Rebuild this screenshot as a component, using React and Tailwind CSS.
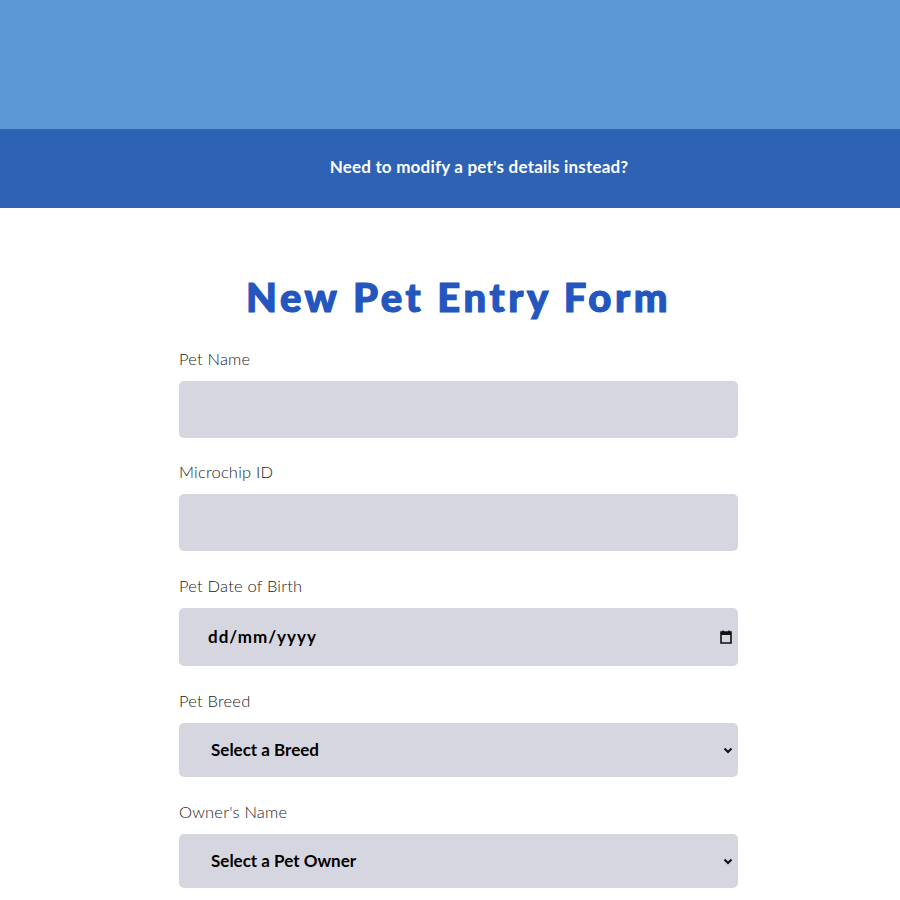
export default function App() {
  const label = "text-[16.5px] leading-[24px] font-light text-[#222] mb-[10px] tracking-[0.2px]";
  return (
    <div className="min-h-screen bg-white" style={{ fontFamily: "Lato, 'Open Sans', sans-serif" }}>
      {/* top bands */}
      <div className="h-[129px] bg-[#5c98d6]" />
      <div className="h-[79px] bg-[#2e62b4] flex items-center justify-center pl-[58px]">
        <p className="text-white font-bold text-[17px] tracking-[0.2px] -mt-[3px]">
          Need to modify a pet's details instead?
        </p>
      </div>

      {/* form */}
      <div className="w-[559px] ml-[179px] pt-[69px]">
        <h1 className="text-center text-[40px] font-black text-[#2356be] tracking-[3.6px] leading-none mb-[30px] [-webkit-text-stroke:1.2px_#2356be]">
          New Pet Entry Form
        </h1>

        <form className="flex flex-col">
          <label className={label}>Pet Name</label>
          <input type="text" className="h-[57px] rounded-[5px] bg-[#d6d6e0] px-4 outline-none mb-[22px]" />

          <label className={label}>Microchip ID</label>
          <input type="text" className="h-[57px] rounded-[5px] bg-[#d6d6e0] px-4 outline-none mb-[23px]" />

          <label className={label}>Pet Date of Birth</label>
          <div className="h-[58px] rounded-[5px] bg-[#d6d6e0] flex items-center pl-[29px] pr-[4px] mb-[23px]">
            <span className="flex-1 font-bold text-[17px] text-black tracking-[1px]">dd/mm/yyyy</span>
            <svg width="16" height="16" viewBox="0 0 16 16">
              <path d="M3 3h10v11H3z" fill="none" stroke="#111" strokeWidth="1.6" />
              <path d="M3 3h10v3H3z" fill="#111" />
              <path d="M5 1.5v2M11 1.5v2" stroke="#111" strokeWidth="1.6" />
            </svg>
          </div>

          <label className={label}>Pet Breed</label>
          <div className="h-[54px] rounded-[5px] bg-[#d6d6e0] flex items-center pl-[32px] pr-[4px] mb-[23px]">
            <span className="flex-1 font-bold text-[17px] text-black">Select a Breed</span>
            <svg width="12" height="12" viewBox="0 0 12 12">
              <path d="M2.5 4.5L6 8l3.5-3.5" fill="none" stroke="#111" strokeWidth="2" />
            </svg>
          </div>

          <label className={label}>Owner's Name</label>
          <div className="h-[54px] rounded-[5px] bg-[#d6d6e0] flex items-center pl-[32px] pr-[4px]">
            <span className="flex-1 font-bold text-[17px] text-black">Select a Pet Owner</span>
            <svg width="12" height="12" viewBox="0 0 12 12">
              <path d="M2.5 4.5L6 8l3.5-3.5" fill="none" stroke="#111" strokeWidth="2" />
            </svg>
          </div>
        </form>
      </div>
    </div>
  );
}
